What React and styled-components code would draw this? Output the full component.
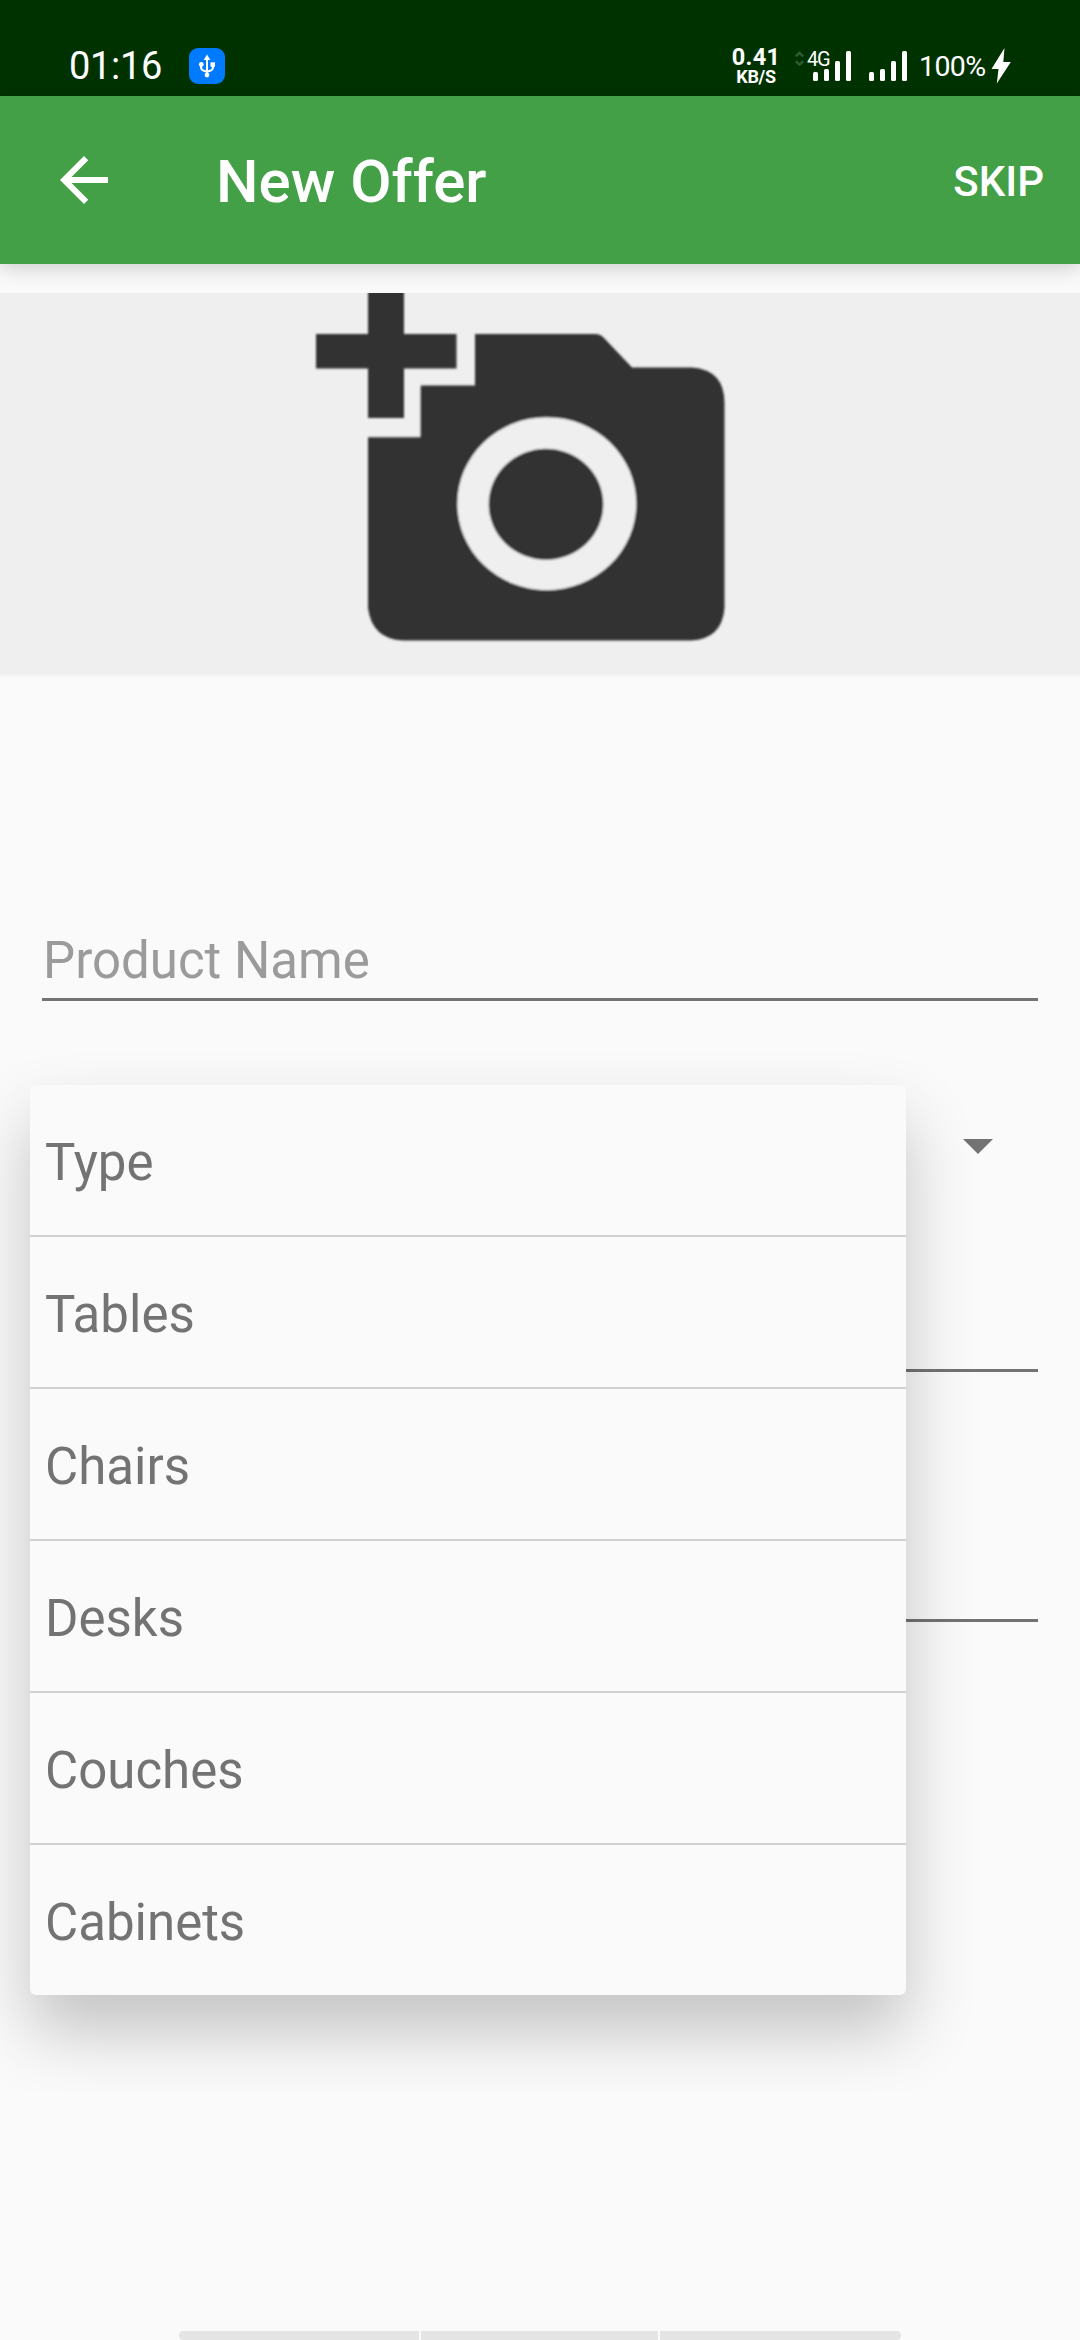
import React from "react";
import styled, { createGlobalStyle } from "styled-components";

const Global = createGlobalStyle`
  * { box-sizing: border-box; }
  body { margin: 0; background: #fafafa; font-family: Roboto, "Liberation Sans", sans-serif; }
`;

const Screen = styled.div`
  width: 1080px;
  height: 2340px;
  background: #fafafa;
  display: flex;
  flex-direction: column;
  overflow: hidden;
`;

const StatusBar = styled.header`
  height: 96px;
  flex: none;
  background: #003200;
  color: #fff;
  display: flex;
  align-items: flex-start;
  justify-content: space-between;
  padding: 48px 69px 0 69px;
`;

const StatusGroup = styled.div`
  display: flex;
  align-items: flex-start;
`;

const Clock = styled.span`
  width: 120px;
  font-size: 38px;
  line-height: 36px;
  letter-spacing: -0.3px;
  white-space: nowrap;
`;

const UsbBadge = styled.span`
  width: 36px;
  height: 36px;
  border-radius: 9px;
  background: #007bff;
  display: flex;
`;

const NetSpeed = styled.span`
  width: 48px;
  display: flex;
  flex-direction: column;
  align-items: center;
  font-weight: 700;
`;

const SpeedLine = styled.span`
  font-size: ${(p) => p.$size}px;
  line-height: ${(p) => p.$line}px;
  letter-spacing: ${(p) => p.$track || 0}px;
  white-space: nowrap;
`;

const MobileData = styled.span`
  display: flex;
  align-items: flex-start;
  width: 36px;
  margin-left: 15px;
  padding-top: 1px;
  margin-right: -18px;
`;

const NetType = styled.span`
  font-size: 20px;
  line-height: 20px;
  letter-spacing: -1.3px;
  margin-left: 3px;
`;

const Bars = styled.span`
  display: flex;
  align-items: flex-end;
  gap: 6px;
  height: 30px;
  margin: 3px 18px 0 0;
`;

const Bar = styled.i`
  width: 5px;
  height: ${(p) => p.$h}px;
  border-radius: 1.5px;
  background: #fff;
`;

const Battery = styled.span`
  width: 72px;
  margin-left: -6px;
  font-size: 28.5px;
  line-height: 38px;
  letter-spacing: -0.6px;
  white-space: nowrap;
`;

const AppBar = styled.nav`
  height: 168px;
  flex: none;
  background: #43a047;
  color: #fff;
  display: flex;
  align-items: center;
  padding: 0 36px 0 48px;
  box-shadow: 0 4px 20px rgba(0, 0, 0, 0.18);
  z-index: 1;
`;

const Title = styled.h1`
  flex: 1;
  margin: 0 0 0 96px;
  font-size: 60px;
  line-height: 72px;
  font-weight: 500;
  padding-top: 4px;
`;

const SkipButton = styled.button`
  border: 0;
  padding: 4px 0 0;
  background: none;
  color: inherit;
  font: 500 42px/50px Roboto, "Liberation Sans", sans-serif;
`;

const Photo = styled.section`
  height: 384px;
  flex: none;
  margin-top: 29px;
  background: linear-gradient(#efefef 380px, #f8f8f8 384px);
`;

const Form = styled.form`
  flex: 1;
  padding: 236px 42px 0;
  display: flex;
  flex-direction: column;
`;

const Field = styled.label`
  height: ${(p) => p.$h}px;
  flex: none;
  display: flex;
  align-items: flex-end;
  padding: 0 1px 12px;
  border-bottom: 3px solid #737373;
  color: #9b9b9b;
  font-size: 51px;
  line-height: 50px;
`;

const Spinner = styled.div`
  position: relative;
  height: 165px;
  flex: none;
  margin-top: 84px;
  display: flex;
  justify-content: flex-end;
  padding: 54px 45px 0 0;
`;

const ShadowClip = styled.div`
  position: absolute;
  top: -100px;
  left: -42px;
  width: 1080px;
  height: 1106px;
  padding: 100px 0 0 30px;
  overflow: hidden;
`;

const Menu = styled.ul`
  width: 876px;
  margin: 0;
  padding: 0;
  list-style: none;
  border-radius: 6px;
  background: #fafafa;
  box-shadow: 0 36px 68px rgba(0, 0, 0, 0.225);
`;

const Option = styled.li`
  height: 144px;
  box-sizing: content-box;
  padding: 6px 0 0 15px;
  display: flex;
  align-items: center;
  color: #737373;
  font-size: 51px;
  line-height: 60px;

  & + & { border-top: 2px solid #d0d0d0; }
`;

const NavHandle = styled.footer`
  width: 722px;
  height: 9px;
  flex: none;
  margin-left: 179px;
  display: grid;
  grid-template-columns: 240px 237px 241px;
  gap: 2px;
  border-radius: 5px;
  overflow: hidden;
`;

const NavPart = styled.span`
  background: #e4e4e4;
`;

const options = ["Type", "Tables", "Chairs", "Desks", "Couches", "Cabinets"];
const levels = [9, 12, 20, 30];

const Signal = () => (
  <Bars>
    {levels.map((h) => <Bar key={h} $h={h} />)}
  </Bars>
);

const UsbIcon = () => (
  <svg width="36" height="36" viewBox="0 0 36 36" fill="none" stroke="#fff" strokeWidth="2">
    <path d="M18 11v16M12 17v2.500q.5 3.500 6 4M24 17v2.500q-.5 3.500-6 4" />
    <path d="M18 6.500l3.300 5.500h-6.600z" fill="#fff" stroke="none" />
    <circle cx="12.300" cy="16.500" r="2.400" fill="#fff" stroke="none" />
    <path d="M21.500 14.300h4.500v4.500h-4.500z" fill="#fff" stroke="none" />
    <circle cx="18" cy="27" r="2.400" fill="#fff" stroke="none" />
  </svg>
);

const DataArrows = () => (
  <svg width="9" height="18" viewBox="0 0 9 18" fill="none" stroke="#2f5a2f" strokeWidth="2.600">
    <path d="M.8 7.300L4.500 4l3.700 3.300M.8 12.300l3.700 3.300 3.700-3.300" />
  </svg>
);

const Bolt = () => (
  <svg width="20" height="36" viewBox="0 0 20 36" fill="#fff">
    <path d="M13.500 0L.5 21h7L5.800 35.500 19.800 14H12.300z" />
  </svg>
);

const BackArrow = () => (
  <svg width="72" height="72" viewBox="0 0 24 24" fill="#fff">
    <path d="M20 11H7.830l5.590-5.590L12 4l-8 8 8 8 1.410-1.410L7.830 13H20v-2z" />
  </svg>
);

const AddPhoto = () => (
  <svg width="1080" height="384" viewBox="0 293 1080 384" fill="#303030">
    <defs>
      <filter id="soft" x="-5%" y="-5%" width="110%" height="110%">
        <feGaussianBlur stdDeviation="1.2" />
      </filter>
    </defs>
    <g filter="url(#soft)">
      <path d="M368 285H404V334H456.500V368.500H404V418H368V368.500H316V334H368Z" />
      <path d="M475 334H595Q600 334 603 337L632 367.500H692Q724.500 370 724.500 403V608Q722 639 691 640.500H403Q372 639 368 608V437.300H420.700V385.500H475Z" />
      <ellipse cx="546.800" cy="503.700" rx="89.500" ry="86.500" fill="#efefef" />
      <ellipse cx="546" cy="504.300" rx="57.300" ry="55.500" />
    </g>
  </svg>
);

const Caret = () => (
  <svg width="30" height="15" viewBox="0 0 30 15" fill="#737373">
    <path d="M0 0H30L15 15Z" />
  </svg>
);

export default function App() {
  return (
    <>
      <Global />
      <Screen>
        <StatusBar>
          <StatusGroup>
            <Clock>01:16</Clock>
            <UsbBadge><UsbIcon /></UsbBadge>
          </StatusGroup>
          <StatusGroup>
            <NetSpeed>
              <SpeedLine $size={23.5} $line={19} $track={0.3}>0.41</SpeedLine>
              <SpeedLine $size={18} $line={19} $track={-0.3}>KB/S</SpeedLine>
            </NetSpeed>
            <MobileData>
              <DataArrows />
              <NetType>4G</NetType>
            </MobileData>
            <Signal />
            <Signal />
            <Battery>100%</Battery>
            <Bolt />
          </StatusGroup>
        </StatusBar>
        <AppBar>
          <BackArrow />
          <Title>New Offer</Title>
          <SkipButton>SKIP</SkipButton>
        </AppBar>
        <Photo><AddPhoto /></Photo>
        <Form>
          <Field $h={88}>Product Name</Field>
          <Spinner>
            <Caret />
            <ShadowClip>
              <Menu>
                {options.map((name) => <Option key={name}>{name}</Option>)}
              </Menu>
            </ShadowClip>
          </Spinner>
          <Field as="div" $h={122} />
          <Field as="div" $h={250} />
        </Form>
        <NavHandle><NavPart /><NavPart /><NavPart /></NavHandle>
      </Screen>
    </>
  );
}
